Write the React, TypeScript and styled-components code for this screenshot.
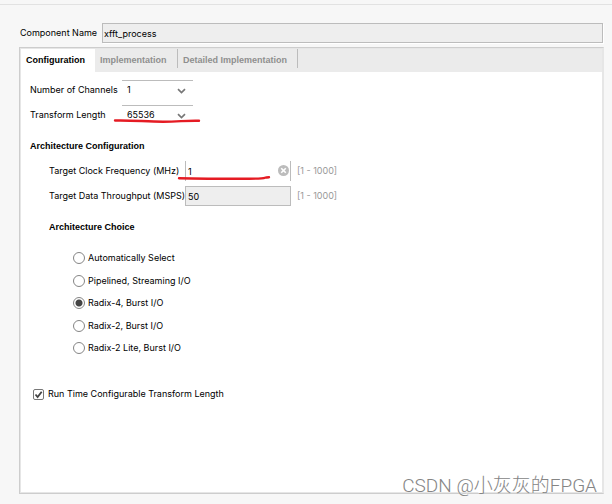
import React, { useState } from "react";
import styled, { createGlobalStyle } from "styled-components";

const GlobalStyle = createGlobalStyle`
  * { box-sizing: border-box; }
  body {
    margin: 0;
    background: #f7f7f7;
    color: #000;
    font: 9px/16px Inter, "Liberation Sans", Arial, sans-serif;
  }
  input, select, button { font: inherit; color: inherit; margin: 0; }
`;

const Page = styled.main`
  position: relative;
  min-height: 100vh;
  display: flex;
  flex-direction: column;
  padding: 4px 0 10px;
`;

const TopRule = styled.hr`
  width: 100%;
  margin: 0 0 18px;
  border: 0;
  border-top: 1px solid #e2e2e2;
`;

const NameRow = styled.div`
  display: flex;
  align-items: center;
  gap: 4px;
  margin: 0 9px 4px 20px;
`;

const NameLabel = styled.label`
  width: 78px;
  white-space: nowrap;
`;

const NameInput = styled.input`
  flex: 1;
  min-width: 0;
  height: 20px;
  padding: 0 1px;
  border: 1px solid #bcbcbc;
  background: #eee;
  box-shadow: 1px 1px 0 #fff;
  outline: none;
`;

const Panel = styled.section`
  flex: 1;
  display: flex;
  flex-direction: column;
  margin: 0 8px 0 19px;
  border: 1px solid #cdcdcd;
  border-right-color: #e6e6e6;
  box-shadow: inset 1px -1px 0 #e6e6e6, inset -1px 1px 0 #e6e6e6;
  background: #fff;
`;

const TabBar = styled.div`
  display: flex;
  height: 23px;
  margin: 1px 1px 0;
  background: #ebebeb;
`;

const Tab = styled.button<{ $active: boolean; $width: number }>`
  position: relative;
  width: ${(p) => p.$width}px;
  height: 23px;
  padding: 0 0 1px 5px;
  border: 0;
  background: ${(p) => (p.$active ? "#fff" : "transparent")};
  color: ${(p) => (p.$active ? "#000" : "#8f8f8f")};
  font: bold 9px/16px "Liberation Sans", Arial, sans-serif;
  text-align: left;
  white-space: nowrap;

  &::after {
    content: "";
    display: ${(p) => (p.$active ? "none" : "block")};
    position: absolute;
    top: 0;
    right: 0;
    height: 19px;
    border-right: 1px solid #bcbcbc;
  }
`;

const Content = styled.form`
  padding: 8px 10px 24px;
`;

const Row = styled.div<{ $indent?: boolean }>`
  display: flex;
  align-items: center;
  height: 20px;
  margin-bottom: 5px;
  padding-left: ${(p) => (p.$indent ? 19 : 0)}px;
`;

const RowLabel = styled.label<{ $width: number }>`
  flex: none;
  width: ${(p) => p.$width}px;
  white-space: nowrap;
`;

const Field = styled.div<{ $width: number }>`
  position: relative;
  width: ${(p) => p.$width}px;
  height: 20px;
`;

const Select = styled.select`
  appearance: none;
  display: block;
  width: 100%;
  height: 20px;
  padding: 0 20px 1px 5px;
  border: 0;
  border-top: 1px solid #bcbcbc;
  border-radius: 0;
  background: #fff;
  outline: none;
`;

const SelectArrow = styled.svg`
  position: absolute;
  right: 7px;
  top: 8px;
  pointer-events: none;
`;

const NumberInput = styled.input`
  display: block;
  width: 100%;
  height: 20px;
  padding: 0 20px 0 2px;
  border: 1px solid #bcbcbc;
  border-width: 0 1px;
  background: #fff;
  outline: none;

  &:read-only {
    border-width: 1px;
    background: #eee;
  }
`;

const ClearButton = styled.button`
  position: absolute;
  top: 4px;
  right: 2px;
  display: flex;
  padding: 0;
  border: 0;
  background: none;
`;

const RangeHint = styled.span`
  margin-left: 6px;
  color: #999;
`;

const PenStroke = styled.svg`
  position: absolute;
  top: 12px;
  left: -8px;
  overflow: visible;
  pointer-events: none;
`;

const SectionTitle = styled.h2`
  margin: 13px 0 7px;
  font: bold 9px/16px "Liberation Sans", Arial, sans-serif;
`;

const ChoiceGroup = styled.fieldset`
  display: flex;
  flex-direction: column;
  justify-content: space-between;
  height: 137px;
  margin: 13px 0 30px 19px;
  padding: 0;
  border: 0;
`;

const ChoiceTitle = styled.legend`
  margin-bottom: 15px;
  padding: 0;
  font: bold 9px/16px "Liberation Sans", Arial, sans-serif;
`;

const Choice = styled.label`
  display: flex;
  align-items: center;
  gap: 3px;
  width: max-content;
  height: 16px;
  margin-left: 24px;
`;

const Radio = styled.input`
  appearance: none;
  width: 12px;
  height: 12px;
  border: 1px solid #858585;
  border-radius: 50%;
  background: #fff;

  &:checked {
    background: radial-gradient(circle, #444 3px, #fff 4px);
  }
`;

const CheckRow = styled.label`
  display: flex;
  align-items: center;
  gap: 4px;
  width: max-content;
  margin-left: 3px;
`;

const CheckMark = styled.span`
  position: relative;
  display: flex;
`;

const Checkbox = styled.input`
  appearance: none;
  width: 11px;
  height: 11px;
  border: 1px solid #777;
  border-radius: 2px;
  background: #fff;

  & + svg { display: none; }
  &:checked + svg { display: block; }
`;

const Tick = styled.svg`
  position: absolute;
  inset: 0;
  pointer-events: none;
`;

const Watermark = styled.div`
  position: absolute;
  right: 15px;
  bottom: 6px;
  color: #858585;
  font: 300 19px/24px Roboto, "Noto Sans CJK SC", sans-serif;
  text-shadow: -1px -1px 0 #fff;
  pointer-events: none;
`;

const tabs = [
  { name: "Configuration", width: 74 },
  { name: "Implementation", width: 83 },
  { name: "Detailed Implementation", width: 120 },
];

const architectures = [
  "Automatically Select",
  "Pipelined, Streaming I/O",
  "Radix-4, Burst I/O",
  "Radix-2, Burst I/O",
  "Radix-2 Lite, Burst I/O",
];

function Arrow() {
  return (
    <SelectArrow width="9" height="6" viewBox="0 0 9 6" fill="none" aria-hidden="true">
      <path d="M1 1.2 L4.5 4.5 L8 1.2" stroke="#777" strokeWidth="1.7" />
    </SelectArrow>
  );
}

export default function App() {
  const [tab, setTab] = useState("Configuration");
  const [clock, setClock] = useState("1");
  const [choice, setChoice] = useState("Radix-4, Burst I/O");

  return (
    <Page>
      <GlobalStyle />
      <TopRule />
      <NameRow>
        <NameLabel htmlFor="name">Component Name</NameLabel>
        <NameInput id="name" readOnly value="xfft_process" />
      </NameRow>
      <Panel>
        <TabBar role="tablist">
          {tabs.map((t) => (
            <Tab
              key={t.name}
              type="button"
              role="tab"
              aria-selected={tab === t.name}
              $active={tab === t.name}
              $width={t.width}
              onClick={() => setTab(t.name)}
            >
              {t.name}
            </Tab>
          ))}
        </TabBar>
        <Content>
          <Row>
            <RowLabel htmlFor="channels" $width={92}>Number of Channels</RowLabel>
            <Field $width={71}>
              <Select id="channels" defaultValue="1">
                <option>1</option>
                <option>2</option>
              </Select>
              <Arrow />
            </Field>
          </Row>
          <Row>
            <RowLabel htmlFor="length" $width={92}>Transform Length</RowLabel>
            <Field $width={71}>
              <Select id="length" defaultValue="65536">
                <option>32768</option>
                <option>65536</option>
              </Select>
              <Arrow />
              <PenStroke width="86" height="6" viewBox="0 0 86 6" fill="none" aria-hidden="true">
                <path d="M1 3.5 C18 3 32 4.7 49 4.7 S70 3.5 85 3.8" stroke="#e51b23" strokeWidth="2.4" strokeLinecap="round" />
              </PenStroke>
            </Field>
          </Row>
          <SectionTitle>Architecture Configuration</SectionTitle>
          <Row $indent>
            <RowLabel htmlFor="clock" $width={136}>Target Clock Frequency (MHz)</RowLabel>
            <Field $width={106}>
              <NumberInput id="clock" value={clock} onChange={(e) => setClock(e.target.value)} />
              <ClearButton type="button" aria-label="Clear" onClick={() => setClock("")}>
                <svg width="11" height="11" viewBox="0 0 11 11" aria-hidden="true">
                  <circle cx="5.5" cy="5.5" r="5.5" fill="#bcbcbc" />
                  <path d="M3.2 3.2 L7.8 7.8 M7.8 3.2 L3.2 7.8" stroke="#fff" strokeWidth="1.6" />
                </svg>
              </ClearButton>
              <PenStroke width="92" height="6" viewBox="0 0 92 6" fill="none" aria-hidden="true">
                <path d="M2 5.2 C25 5.7 50 5.7 72 5.7 S84 4.4 92 4.2" stroke="#e51b23" strokeWidth="2.4" strokeLinecap="round" />
              </PenStroke>
            </Field>
            <RangeHint>[1 - 1000]</RangeHint>
          </Row>
          <Row $indent>
            <RowLabel htmlFor="throughput" $width={136}>Target Data Throughput (MSPS)</RowLabel>
            <Field $width={106}>
              <NumberInput id="throughput" readOnly value="50" />
            </Field>
            <RangeHint>[1 - 1000]</RangeHint>
          </Row>
          <ChoiceGroup>
            <ChoiceTitle>Architecture Choice</ChoiceTitle>
            {architectures.map((name) => (
              <Choice key={name}>
                <Radio
                  type="radio"
                  name="architecture"
                  checked={choice === name}
                  onChange={() => setChoice(name)}
                />
                {name}
              </Choice>
            ))}
          </ChoiceGroup>
          <CheckRow>
            <CheckMark>
              <Checkbox type="checkbox" defaultChecked />
              <Tick width="11" height="11" viewBox="0 0 11 11" fill="none" aria-hidden="true">
                <path d="M2.5 5.5 L4.6 8 L8.7 2.7" stroke="#444" strokeWidth="1.8" />
              </Tick>
            </CheckMark>
            Run Time Configurable Transform Length
          </CheckRow>
        </Content>
      </Panel>
      <Watermark>CSDN @小灰灰的FPGA</Watermark>
    </Page>
  );
}
